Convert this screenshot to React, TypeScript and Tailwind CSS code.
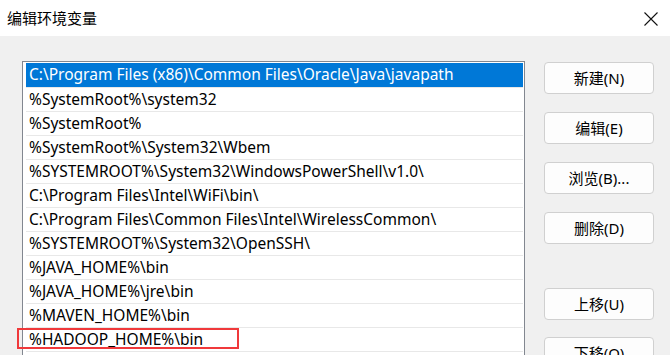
import React from "react";

const rows = [
  "C:\\Program Files (x86)\\Common Files\\Oracle\\Java\\javapath",
  "%SystemRoot%\\system32",
  "%SystemRoot%",
  "%SystemRoot%\\System32\\Wbem",
  "%SYSTEMROOT%\\System32\\WindowsPowerShell\\v1.0\\",
  "C:\\Program Files\\Intel\\WiFi\\bin\\",
  "C:\\Program Files\\Common Files\\Intel\\WirelessCommon\\",
  "%SYSTEMROOT%\\System32\\OpenSSH\\",
  "%JAVA_HOME%\\bin",
  "%JAVA_HOME%\\jre\\bin",
  "%MAVEN_HOME%\\bin",
  "%HADOOP_HOME%\\bin",
  "",
];

const font = { fontFamily: '"Noto Sans", "Noto Sans CJK SC", sans-serif' };

function Btn({ label, className = "" }: { label: string; className?: string }) {
  return (
    <div
      className={`w-[110px] h-[32px] shrink-0 rounded-[4px] border border-[#d0d0d0] bg-[#fdfdfd] flex items-center justify-center text-[15px] text-black ${className}`}
    >
      {label}
    </div>
  );
}

export default function App() {
  return (
    <div className="w-[670px] h-[355px] overflow-hidden flex flex-col bg-[#f0f0f0]" style={font}>
      <div className="h-[36px] shrink-0 bg-white flex items-center justify-between pl-[7px] pr-[12px]">
        <span className="text-[15px] text-black leading-none">编辑环境变量</span>
        <svg width="14" height="14" viewBox="0 0 14 14" className="mt-[1px]">
          <path d="M0.5 0.5 L13.5 13.5 M13.5 0.5 L0.5 13.5" stroke="#111" strokeWidth="1.1" />
        </svg>
      </div>
      <div className="flex-1 flex items-start pl-[22px] pt-[25px]">
        <div className="relative w-[503px] h-[400px] shrink-0 border border-[#828790] bg-white pt-[1px] pl-[3px] pr-[1px]">
          {rows.map((r, i) => (
            <div
              key={i}
              className={`h-[24px] flex items-center pl-[3px] text-[15.5px] whitespace-nowrap ${
                i === 0 ? "bg-[#0078d7] text-white" : "text-black border-t border-[#e8e8e8]"
              }`}
            >
              {r}
            </div>
          ))}
          <div className="absolute left-[-6px] top-[266px] w-[222px] h-[21px] border-2 border-[#f0393b]" />
        </div>
        <div className="ml-[19px] mt-[1px] flex flex-col">
          <Btn label="新建(N)" />
          <Btn label="编辑(E)" className="mt-[18px]" />
          <Btn label="浏览(B)..." className="mt-[18px]" />
          <Btn label="删除(D)" className="mt-[18px]" />
          <Btn label="上移(U)" className="mt-[44px]" />
          <Btn label="下移(O)" className="mt-[17px]" />
        </div>
      </div>
    </div>
  );
}
